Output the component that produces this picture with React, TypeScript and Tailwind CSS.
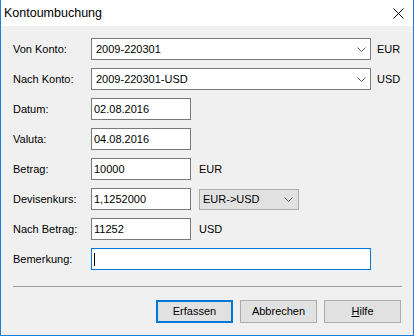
const font = { fontFamily: '"Liberation Sans", Arial, sans-serif' };

function Chevron() {
  return (
    <svg width="9" height="5" viewBox="0 0 9 5" className="shrink-0">
      <path d="M0.5 0.5 L4.5 4.5 L8.5 0.5" fill="none" stroke="#606060" strokeWidth="1" />
    </svg>
  );
}

function Label({ children }: { children: React.ReactNode }) {
  return <div className="w-[78px] shrink-0 text-[11px] text-black">{children}</div>;
}

function TextBox({ value, wide }: { value: string; wide?: boolean }) {
  return (
    <div
      className={
        'h-[22px] shrink-0 border border-[#7a7a7a] bg-white pl-[2px] flex items-center text-[11px] text-black ' +
        (wide ? 'w-[280px]' : 'w-[100px]')
      }
    >
      {value}
    </div>
  );
}

function Combo({ value }: { value: string }) {
  return (
    <div className="h-[22px] w-[280px] shrink-0 border border-[#7a7a7a] bg-white pl-[4px] pr-[4px] flex items-center justify-between text-[11px] text-black">
      <span>{value}</span>
      <Chevron />
    </div>
  );
}

function Row({ children }: { children: React.ReactNode }) {
  return <div className="flex items-center h-[22px]">{children}</div>;
}

function Btn({ children, primary }: { children: React.ReactNode; primary?: boolean }) {
  return (
    <button
      className={
        'h-[23px] w-[77px] bg-[#e1e1e1] text-[11px] text-black flex items-center justify-center ' +
        (primary ? 'border-2 border-[#0078d7]' : 'border border-[#adadad]')
      }
    >
      {children}
    </button>
  );
}

export default function App() {
  return (
    <div className="w-[414px] h-[336px] flex flex-col border-x border-b border-[#1c7ed6] bg-[#f0f0f0]" style={font}>
      {/* title bar */}
      <div className="h-[26px] bg-white flex items-center justify-between pl-[3px] pr-[9px]">
        <span className="text-[12.5px] text-black">Kontoumbuchung</span>
        <svg width="11" height="11" viewBox="0 0 11 11">
          <path d="M0.5 0.5 L10.5 10.5 M10.5 0.5 L0.5 10.5" stroke="#000" strokeWidth="1" />
        </svg>
      </div>

      <div className="flex flex-col pt-[12px] pl-[12px] gap-[8px]">
        <Row>
          <Label>Von Konto:</Label>
          <Combo value="2009-220301" />
          <span className="ml-[6px] text-[11px] text-black">EUR</span>
        </Row>
        <Row>
          <Label>Nach Konto:</Label>
          <Combo value="2009-220301-USD" />
          <span className="ml-[6px] text-[11px] text-black">USD</span>
        </Row>
        <Row>
          <Label>Datum:</Label>
          <TextBox value="02.08.2016" />
        </Row>
        <Row>
          <Label>Valuta:</Label>
          <TextBox value="04.08.2016" />
        </Row>
        <Row>
          <Label>Betrag:</Label>
          <TextBox value="10000" />
          <span className="ml-[8px] text-[11px] text-black">EUR</span>
        </Row>
        <Row>
          <Label>Devisenkurs:</Label>
          <TextBox value="1,1252000" />
          <div className="ml-[8px] h-[21px] w-[100px] border border-[#adadad] bg-[#e1e1e1] pl-[3px] pr-[5px] flex items-center justify-between text-[11px] text-black">
            <span>EUR-&gt;USD</span>
            <Chevron />
          </div>
        </Row>
        <Row>
          <Label>Nach Betrag:</Label>
          <TextBox value="11252" />
          <span className="ml-[8px] text-[11px] text-black">USD</span>
        </Row>
        <Row>
          <Label>Bemerkung:</Label>
          <div className="h-[22px] w-[280px] border border-[#0078d7] bg-white pl-[2px] flex items-center">
            <div className="w-px h-[13px] bg-black" />
          </div>
        </Row>
      </div>

      <div className="mt-[16px] ml-[12px] w-[389px] h-px bg-[#a0a0a0]" />

      <div className="mt-[13px] flex gap-[7px] pl-[155px]">
        <Btn primary>Erfassen</Btn>
        <Btn>Abbrechen</Btn>
        <Btn>
          <span>
            <span className="underline">H</span>ilfe
          </span>
        </Btn>
      </div>
    </div>
  );
}
